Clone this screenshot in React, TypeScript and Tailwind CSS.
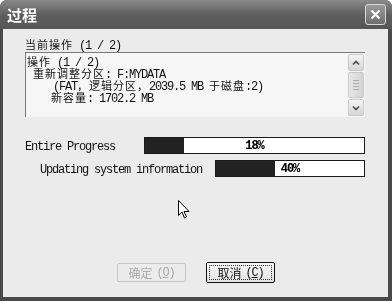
import React from "react"

const CJK = /([\u3000-\u303f\u4e00-\u9fff\uff00-\uffef]+)/

// SimSun-like mixed text: CJK runs on a 12px grid, latin runs squeezed to 6px per char
function T({ text }: { text: string }) {
  const parts = text.split(CJK).filter((p) => p.length > 0)
  return (
    <>
      {parts.map((p, i) =>
        CJK.test(p) ? (
          <span key={i} className="inline-block h-[12px] align-baseline font-['Noto_Sans_CJK_SC',sans-serif] text-[11px] leading-[12px] tracking-[1px]">
            {p}
          </span>
        ) : (
          <span key={i} className="inline-block h-[12px] align-baseline font-['Liberation_Mono',monospace] text-[12px] leading-[12px] tracking-[-1.2px] whitespace-pre">
            {p}
          </span>
        )
      )}
    </>
  )
}

function Progress({ pct, width }: { pct: number; width: number }) {
  return (
    <div
      className="relative h-[17px] shrink-0 border border-[#1a1a1a] bg-white"
      style={{ width }}
    >
      <div className="absolute left-0 top-0 bottom-0 bg-[#222]" style={{ width: `${(pct / 100) * (width - 2)}px` }} />
      <div className="absolute inset-0 flex items-center justify-center font-['Liberation_Mono',monospace] text-[12px] font-bold tracking-[-1px] leading-none">
        <span className="mix-blend-difference text-white">{pct}%</span>
      </div>
    </div>
  )
}

function ScrollBar() {
  return (
    <div className="flex w-[16px] flex-col bg-[#f3f3f3]">
      <div className="flex h-[17px] items-center justify-center rounded-[2px] border border-[#c9c9c9] bg-gradient-to-b from-[#f4f4f4] to-[#d6d6d6]">
        <svg width="8" height="6" viewBox="0 0 8 6">
          <path d="M1 4.5 L4 1.5 L7 4.5" fill="none" stroke="#4a4a4a" strokeWidth="1.6" />
        </svg>
      </div>
      <div className="mt-[1px] flex h-[26px] flex-col items-center justify-center gap-[2px] rounded-[2px] border border-[#c9c9c9] bg-gradient-to-r from-[#e6e6e6] to-[#d4d4d4]">
        <div className="h-px w-[6px] bg-[#b0b0b0]" />
        <div className="h-px w-[6px] bg-[#b0b0b0]" />
        <div className="h-px w-[6px] bg-[#b0b0b0]" />
        <div className="h-px w-[6px] bg-[#b0b0b0]" />
      </div>
      <div className="flex-1" />
      <div className="flex h-[17px] items-center justify-center rounded-[2px] border border-[#c9c9c9] bg-gradient-to-b from-[#f4f4f4] to-[#d6d6d6]">
        <svg width="8" height="6" viewBox="0 0 8 6">
          <path d="M1 1.5 L4 4.5 L7 1.5" fill="none" stroke="#4a4a4a" strokeWidth="1.6" />
        </svg>
      </div>
    </div>
  )
}

export default function App() {
  return (
    <div className="relative flex h-[301px] w-[392px] flex-col overflow-hidden rounded-t-[7px] bg-[#4a4a4a]">
      {/* Title bar */}
      <div className="flex h-[29px] items-center justify-between bg-gradient-to-b from-[#8a8a8a] via-[#5f5f5f] to-[#555] pl-[7px] pr-[6px]">
        <span className="font-['Noto_Sans_CJK_SC',sans-serif] text-[15px] font-bold leading-none text-white">
          过程
        </span>
        <div className="flex h-[21px] w-[21px] items-center justify-center rounded-[3px] border border-[#d8d8d8] bg-gradient-to-b from-[#9a9a9a] to-[#6e6e6e]">
          <svg width="11" height="11" viewBox="0 0 11 11">
            <path d="M1.5 1.5 L9.5 9.5 M9.5 1.5 L1.5 9.5" stroke="white" strokeWidth="2.2" />
          </svg>
        </div>
      </div>

      {/* Body */}
      <div className="mb-[4px] ml-[3px] mr-[4px] flex flex-1 flex-col bg-[#ebebeb] pl-[22px] pt-[8px]">
        <div className="h-[13px] whitespace-nowrap leading-[13px] text-[#111]">
          <T text="当前操作 (1 / 2)" />
        </div>
        <div className="mt-[2px] flex h-[65px] w-[340px] border-l border-t border-[#7a7a7a] border-b-white border-r-white bg-[#f6f6f6] pr-[1px] pt-[1px] pb-[1px]">
          <div className="flex-1 whitespace-nowrap pl-[1px] leading-[12px] text-[#111]">
            <div className="h-[12px]"><T text="操作 (1 / 2)" /></div>
            <div className="h-[12px] pl-[6px]"><T text="重新调整分区: F:MYDATA" /></div>
            <div className="h-[12px] pl-[26px]"><T text="(FAT，逻辑分区，2039.5 MB 于磁盘:2)" /></div>
            <div className="h-[12px] pl-[24px]"><T text="新容量: 1702.2 MB" /></div>
          </div>
          <ScrollBar />
        </div>

        <div className="mt-[20px] flex h-[17px] items-center">
          <div className="w-[119px] leading-[12px] text-[#111]"><T text="Entire Progress" /></div>
          <Progress pct={18} width={221} />
        </div>
        <div className="mt-[6px] flex h-[17px] items-center pl-[15px]">
          <div className="w-[175px] leading-[12px] text-[#111]"><T text="Updating system information" /></div>
          <Progress pct={40} width={150} />
        </div>

        <div className="mt-auto mb-[14px] flex items-center gap-[20px] pl-[92px]">
          <div className="flex h-[19px] w-[69px] items-center justify-center rounded-[2px] border border-[#c4c4c4] bg-[#ececec] text-[#a9a9a9]">
            <span className="font-['Noto_Sans_CJK_SC',sans-serif] text-[12px] leading-[12px]">确定</span>
            <span className="ml-[4px] font-['Liberation_Mono',monospace] text-[12px] leading-[12px] tracking-[-1.2px]">
              (<span className="underline">O</span>)
            </span>
          </div>
          <div className="flex h-[21px] w-[69px] items-center justify-center rounded-[2px] border border-[#111] bg-gradient-to-b from-[#f8f8f8] to-[#e4e4e4] p-[2px] text-[#111]">
            <div className="flex h-full w-full items-center justify-center border border-dotted border-[#333]">
              <span className="font-['Noto_Sans_CJK_SC',sans-serif] text-[12px] leading-[12px]">取消</span>
              <span className="ml-[4px] font-['Liberation_Mono',monospace] text-[12px] leading-[12px] tracking-[-1.2px]">
                (<span className="underline">C</span>)
              </span>
            </div>
          </div>
        </div>
      </div>

      {/* Mouse cursor */}
      <svg className="absolute left-[178px] top-[200px]" width="12" height="20" viewBox="0 0 12 20">
        <path d="M0.5 0.5 L0.5 15.5 L4 12 L6.5 18 L8.5 17 L6 11.5 L11 11.5 Z" fill="white" stroke="black" strokeWidth="1" />
      </svg>
    </div>
  )
}
